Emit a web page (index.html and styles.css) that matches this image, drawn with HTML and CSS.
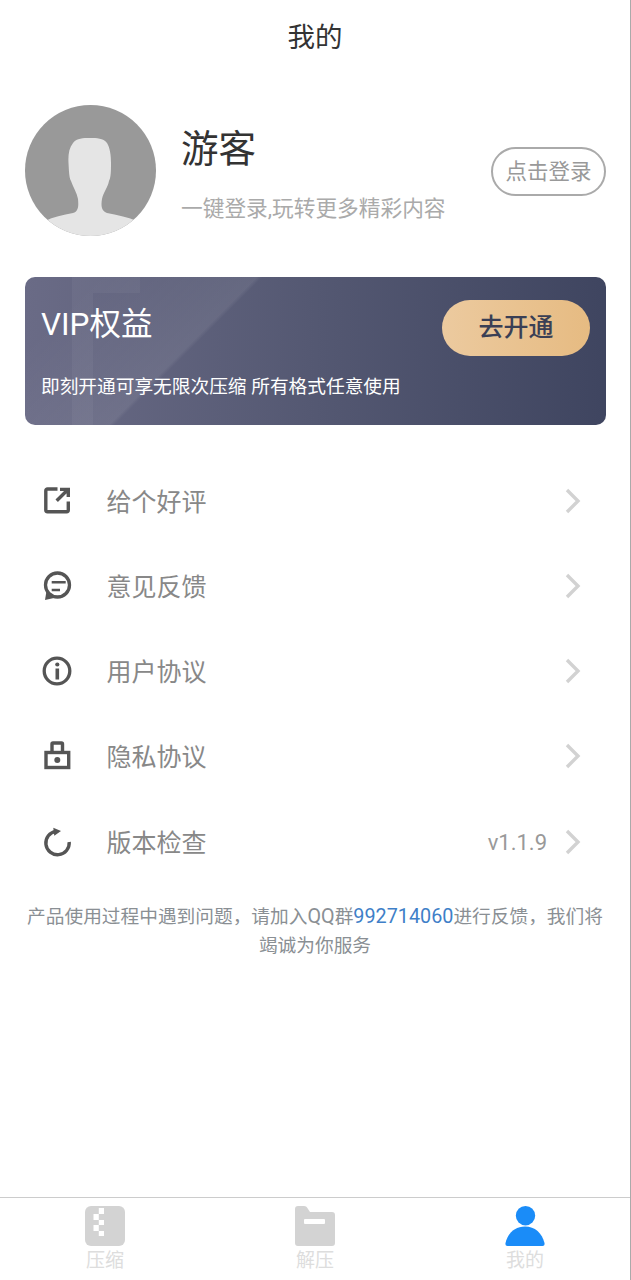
FILE: index.html
```html
<!DOCTYPE html>
<html lang="zh-CN">
<head>
    <meta charset="UTF-8">
    <meta name="viewport" content="width=device-width, initial-scale=1.0">
    <title>我的</title>
    <link rel="stylesheet" href="styles.css">
</head>
<body>
    <div class="page">
        <div class="title-bar">我的</div>

        <div class="profile">
            <svg class="avatar" viewBox="0 0 131 131">
                <defs>
                    <clipPath id="avatar-clip"><circle cx="65.5" cy="65.5" r="65.5"/></clipPath>
                </defs>
                <g clip-path="url(#avatar-clip)">
                    <rect width="131" height="131" fill="#999"/>
                    <path d="M65 33C58 33 52 33 48 38C44 43 43 50 43.500 58C44 66 44 72 46 76C48 82 52 88 53 94C53.500 100 54 106 48 108C38 110 28 112 20 116V135H112V116C102 112 92 110 82 108C76 106 76 100 77 94C78 88 83 82 84 76C86 72 86 66 86 58C86 50 85 43 82 38C78 33 72 33 65 33z" fill="#e5e5e5"/>
                </g>
            </svg>
            <div class="profile-info">
                <div class="profile-name">游客</div>
                <div class="profile-desc">一键登录,玩转更多精彩内容</div>
            </div>
            <div class="login-btn">点击登录</div>
        </div>

        <div class="vip-card">
            <div class="vip-top">
                <div class="vip-title">VIP权益</div>
                <div class="vip-btn">去开通</div>
            </div>
            <div class="vip-desc">即刻开通可享无限次压缩 所有格式任意使用</div>
        </div>

        <div class="menu">
            <div class="menu-row">
                <svg class="menu-icon" viewBox="0 0 30 30" fill="none" stroke="#555" stroke-width="3.4">
                    <path d="M15.500 3H5.500A1.700 1.700 0 0 0 3.800 4.700V24a1.700 1.700 0 0 0 1.700 1.700H24.600A1.700 1.700 0 0 0 26.300 24V15.500"/>
                    <path d="M14.700 14.700 25 4.500M18 3.400h8.300V11"/>
                </svg>
                <span class="menu-label">给个好评</span>
                <svg class="chevron" viewBox="0 0 16 26"><path d="M2 2l11 11L2 24"/></svg>
            </div>
            <div class="menu-row">
                <svg class="menu-icon" viewBox="0 0 30 30" fill="none" stroke="#555" stroke-width="3.3">
                    <circle cx="15.500" cy="14" r="12"/>
                    <path d="M3 29l1.500-9 7.500 7z" fill="#555" stroke="none"/>
                    <path d="M9.700 11.300h14M9.700 19H18" stroke-width="2.600"/>
                </svg>
                <span class="menu-label">意见反馈</span>
                <svg class="chevron" viewBox="0 0 16 26"><path d="M2 2l11 11L2 24"/></svg>
            </div>
            <div class="menu-row">
                <svg class="menu-icon" viewBox="0 0 30 30" fill="none" stroke="#555" stroke-width="3.3">
                    <circle cx="15" cy="15" r="12.800"/>
                    <path d="M15.300 12.500v11" stroke-width="3.600"/>
                    <circle cx="15.300" cy="8.500" r="2.100" fill="#555" stroke="none"/>
                </svg>
                <span class="menu-label">用户协议</span>
                <svg class="chevron" viewBox="0 0 16 26"><path d="M2 2l11 11L2 24"/></svg>
            </div>
            <div class="menu-row">
                <svg class="menu-icon" viewBox="0 0 30 30" fill="none" stroke="#555" stroke-width="3.4">
                    <rect x="4" y="11.500" width="22.700" height="15"/>
                    <path d="M10 11.500V3a1 1 0 0 1 1-1h8.500a1 1 0 0 1 1 1v8.500"/>
                    <circle cx="15.300" cy="19" r="3" fill="#555" stroke="none"/>
                </svg>
                <span class="menu-label">隐私协议</span>
                <svg class="chevron" viewBox="0 0 16 26"><path d="M2 2l11 11L2 24"/></svg>
            </div>
            <div class="menu-row">
                <svg class="menu-icon" viewBox="0 0 30 30" fill="none" stroke="#555" stroke-width="3.4">
                    <path d="M14 4.400A11.700 11.700 0 1 0 27.200 15"/>
                    <path d="M11.300.7 19 4l-6.700 4.700z" fill="#555" stroke="none"/>
                </svg>
                <span class="menu-label">版本检查</span>
                <span class="menu-version">v1.1.9</span>
                <svg class="chevron" viewBox="0 0 16 26"><path d="M2 2l11 11L2 24"/></svg>
            </div>
        </div>

        <p class="notice">产品使用过程中遇到问题，请加入<span class="notice-latin">QQ</span>群<span class="notice-latin notice-link">992714060</span>进行反馈，我们将竭诚为你服务</p>

        <div class="tab-bar">
            <div class="tab">
                <svg class="tab-icon" viewBox="0 0 40 40">
                    <rect width="40" height="40" rx="6" fill="#d3d3d3"/>
                    <path d="M13.800 2H19v6h-5.200zM8.500 8h5.300v6H8.500zM13.800 14H19v5h-5.200zM8.500 19h5.300v6H8.500zM13.800 25H19v5h-5.200z" fill="#fff"/>
                </svg>
                <span class="tab-label">压缩</span>
            </div>
            <div class="tab">
                <svg class="tab-icon" viewBox="0 0 40 40">
                    <path d="M3 0h6c2 0 3 1 4 3l2 3h22c2 0 3 1 3 3v28c0 2-1 3-3 3H3c-2 0-3-1-3-3V3c0-2 1-3 3-3z" fill="#d3d3d3"/>
                    <rect x="9" y="13" width="21" height="5" rx="1" fill="#fff"/>
                </svg>
                <span class="tab-label">解压</span>
            </div>
            <div class="tab">
                <svg class="tab-icon" viewBox="0 0 40 40">
                    <circle cx="20.500" cy="9.700" r="9.700" fill="#1a8cf8"/>
                    <path d="M.5 37C3 27 10 20.500 20 20.500S37 27 39.500 37c.3 2-.5 3-2 3h-35c-1.500 0-2.300-1-2-3z" fill="#1a8cf8"/>
                </svg>
                <span class="tab-label">我的</span>
            </div>
        </div>
    </div>
</body>
</html>
```

FILE: styles.css
```css
* {
    margin: 0;
    padding: 0;
    box-sizing: border-box;
}

body {
    font-family: Roboto, "Noto Sans CJK SC", sans-serif;
    background-color: #fff;
    color: #333;
}

.page {
    width: 631px;
    height: 1280px;
    border-right: 1px solid #aaa;
    display: flex;
    flex-direction: column;
}

.title-bar {
    height: 75px;
    line-height: 76px;
    text-align: center;
    font-size: 27.5px;
    color: #333;
}

.profile {
    display: flex;
    align-items: center;
    margin-top: 30px;
    padding: 0 24px 0 25px;
}

.avatar {
    width: 131px;
    height: 131px;
    flex-shrink: 0;
}

.profile-info {
    flex: 1;
    margin-left: 25px;
    padding-top: 6px;
}

.profile-name {
    font-size: 37.5px;
    line-height: 50px;
    color: #333;
}

.profile-desc {
    font-size: 21.7px;
    line-height: 30px;
    margin-top: 20px;
    color: #aaa;
}

.login-btn {
    width: 115px;
    height: 49px;
    line-height: 46px;
    margin-top: 1px;
    text-align: center;
    font-size: 21.5px;
    color: #999;
    border: 2px solid #aaa;
    border-radius: 25px;
}

.vip-card {
    height: 148px;
    margin: 41px 24px 0 25px;
    padding: 23px 16px 0;
    border-radius: 10px;
    color: #fff;
    background:
        linear-gradient(135deg, rgba(255, 255, 255, 0) 50px, rgba(255, 255, 255, 0.05) 127px, rgba(255, 255, 255, 0.08) 164px, rgba(255, 255, 255, 0) 168px) 0 0 / 100% 100% no-repeat,
        linear-gradient(90deg, rgba(255, 255, 255, 0) 47px, rgba(255, 255, 255, 0.04) 47px, rgba(255, 255, 255, 0.04) 68px, rgba(255, 255, 255, 0) 68px) 0 0 / 100% 100% no-repeat,
        linear-gradient(rgba(255, 255, 255, 0.04), rgba(255, 255, 255, 0.04)) 68px 0 / 47px 16px no-repeat,
        linear-gradient(90deg, #6a6b86, #545872 50%, #3f4560);
}

.vip-top {
    display: flex;
    align-items: center;
    justify-content: space-between;
}

.vip-title {
    font-size: 31.5px;
    line-height: 46px;
    padding-bottom: 6px;
}

.vip-btn {
    width: 148px;
    height: 56px;
    line-height: 56px;
    text-align: center;
    font-size: 25px;
    font-weight: 500;
    color: #3a3f55;
    border-radius: 28px;
    background: linear-gradient(90deg, #ecca9f, #e6bb82);
}

.vip-desc {
    font-size: 18.7px;
    line-height: 28px;
    margin-top: 17px;
}

.menu {
    margin-top: 33px;
}

.menu-row {
    display: flex;
    align-items: center;
    height: 85.25px;
    padding-left: 42px;
    padding-right: 49px;
}

.menu-icon {
    width: 30px;
    height: 30px;
    flex-shrink: 0;
}

.menu-label {
    flex: 1;
    margin-left: 34.5px;
    padding-bottom: 2px;
    font-size: 25px;
    color: #888;
}

.menu-version {
    font-size: 22px;
    color: #999;
    margin-right: 18px;
    padding-top: 1px;
}

.chevron {
    width: 16px;
    height: 26px;
    fill: none;
    stroke: #d2d2d2;
    stroke-width: 3.4;
}

.notice {
    margin-top: 18px;
    padding: 0 24px;
    text-align: center;
    font-size: 18.7px;
    line-height: 29px;
    color: #8a8f94;
}

.notice-latin {
    font-size: 19.8px;
}

.notice-link {
    color: #3f7fc8;
}

.tab-bar {
    display: flex;
    margin-top: auto;
    height: 83px;
    border-top: 1px solid #ccc;
}

.tab {
    flex: 1;
    display: flex;
    flex-direction: column;
    align-items: center;
    padding-top: 8px;
}

.tab-icon {
    width: 40px;
    height: 40px;
}

.tab-label {
    font-size: 19px;
    line-height: 30px;
    color: #ddd;
}
```
